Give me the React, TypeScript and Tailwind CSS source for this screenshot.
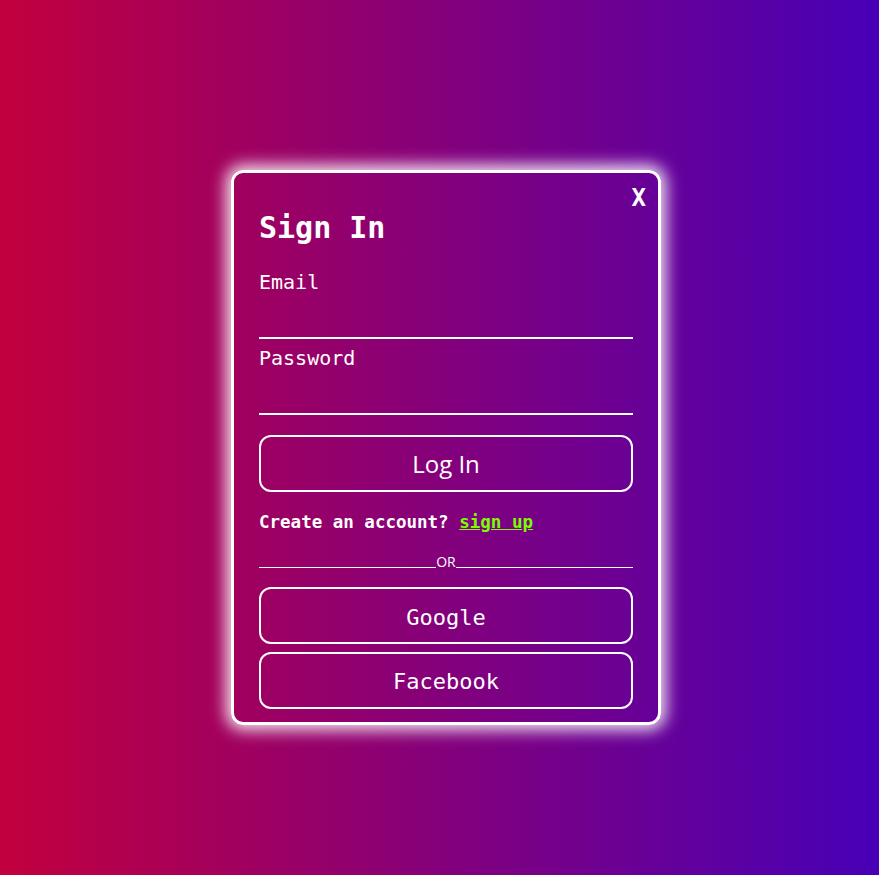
import { ReactNode } from "react";

const mono = "font-['DejaVu_Sans_Mono','Liberation_Mono',monospace]";
const sans = "font-['Open_Sans','Noto_Sans',sans-serif]";

function Field({ label, type }: { label: string; type: string }) {
  return (
    <label className="flex flex-col">
      <span className={`${mono} text-[20px] leading-[26px] text-white`}>{label}</span>
      <input
        type={type}
        className="mt-[14px] h-[30px] border-b-2 border-white bg-transparent text-white outline-none"
      />
    </label>
  );
}

function OutlineButton({ children, className }: { children: ReactNode; className: string }) {
  return (
    <button
      className={`flex h-[57px] w-full items-center justify-center rounded-[12px] border-2 border-white text-white ${className}`}
    >
      {children}
    </button>
  );
}

export default function App() {
  return (
    <div className="flex min-h-[875px] w-full items-center justify-center bg-[linear-gradient(to_right,#c2003e,#4700b7)]">
      <div className="relative ml-[13px] mt-[20px] w-[430px] rounded-[12px] border-[3px] border-white px-[25px] pb-[13px] pt-[35px] shadow-[0_0_16px_5px_rgba(255,255,255,0.9)]">
        <button className={`absolute right-[12px] top-[7px] ${mono} text-[24px] font-bold text-white`}>X</button>
        <h1 className={`${mono} text-[30px] font-bold leading-[40px] text-white`}>Sign In</h1>
        <div className="mt-[21px] flex flex-col gap-[6px]">
          <Field label="Email" type="email" />
          <Field label="Password" type="password" />
        </div>
        <div className="mt-[20px]">
          <OutlineButton className={`${sans} text-[24px]`}>Log In</OutlineButton>
        </div>
        <p className={`${mono} mt-[18px] text-[17.5px] font-bold leading-[24px] text-white`}>
          Create an account?{" "}
          <a href="#" className="text-[#7cfc00] underline">
            sign up
          </a>
        </p>
        <div className="mt-[20px] flex items-end">
          <span className="mb-[2px] flex-1 border-b border-white" />
          <span className={`${sans} text-[14px] leading-[16px] text-white`}>OR</span>
          <span className="mb-[2px] flex-1 border-b border-white" />
        </div>
        <div className="mt-[17px] flex flex-col gap-[8px]">
          <OutlineButton className={`${mono} pt-[3px] text-[22px]`}>Google</OutlineButton>
          <OutlineButton className={`${mono} pt-[2px] text-[22px]`}>Facebook</OutlineButton>
        </div>
      </div>
    </div>
  );
}
